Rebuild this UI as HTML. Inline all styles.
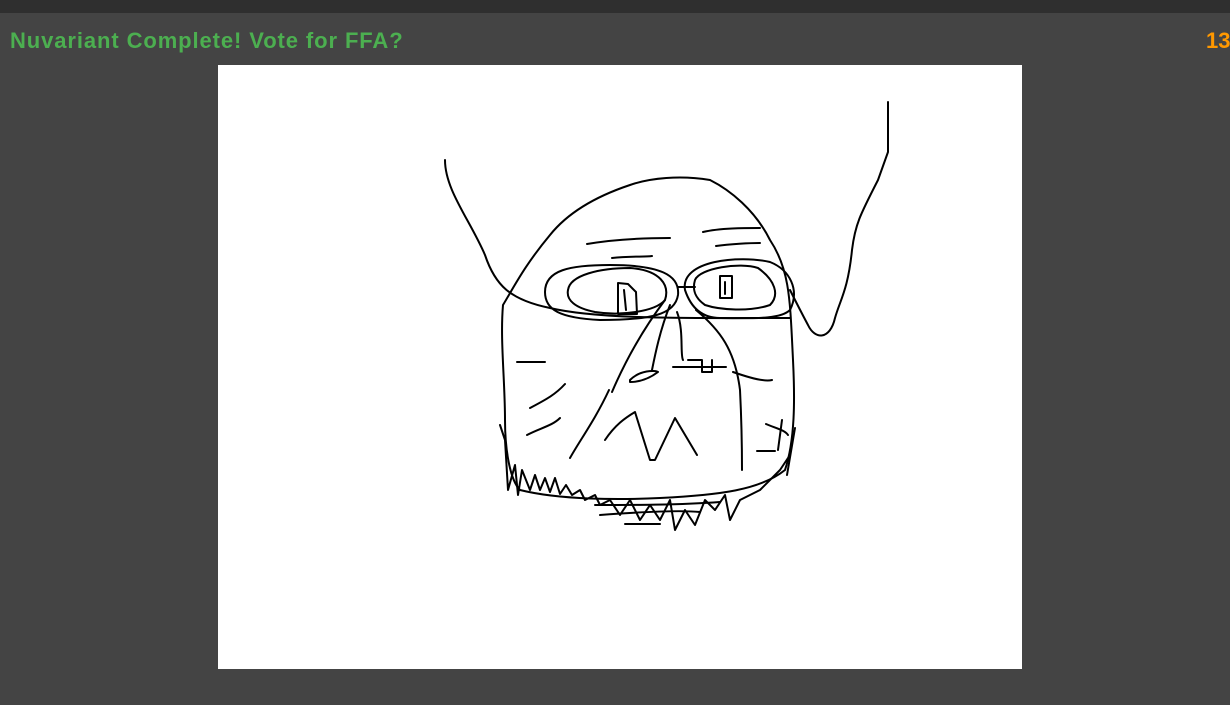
<!DOCTYPE html>
<html><head><style>
html,body{margin:0;padding:0;width:1230px;height:705px;overflow:hidden;background:#444;font-family:"Liberation Sans",sans-serif}
.top{position:absolute;left:0;top:0;width:1230px;height:13px;background:#2f2f2f}
.t{position:absolute;left:10px;top:28px;font-size:22px;font-weight:bold;color:#4caf50;letter-spacing:0.9px}
.n{position:absolute;left:1206px;top:28px;font-size:22px;font-weight:bold;color:#ff9800}
.c{position:absolute;left:218px;top:65px;width:804px;height:604px;background:#fff}
svg{position:absolute;left:0;top:0}
</style></head><body>
<div class="top"></div>
<div class="t">Nuvariant Complete! Vote for FFA?</div>
<div class="n">13</div>
<div class="c"></div>
<svg width="1230" height="705" fill="none" stroke="#000" stroke-width="2" stroke-linejoin="round" stroke-linecap="round">
<path d="M445 160 C445 190 470 220 485 255 C495 285 510 300 550 308 C600 320 700 318 790 318"/>
<path d="M888 102 V152 L878 180 C860 215 855 225 852 250 C848 290 840 300 835 318 C830 340 815 340 808 325 C800 310 795 300 790 290"/>
<path d="M503 305 C500 340 505 380 505 420 C505 450 510 480 520 490 C560 500 620 500 660 498 C720 495 760 490 785 470 C795 440 795 400 793 360 C790 300 790 270 770 240 C755 210 730 190 710 180 C680 175 650 178 630 185 C600 195 570 210 550 235 C525 265 515 285 503 305"/>
<path d="M545 292 C545 270 570 265 610 265 C660 265 680 275 678 295 C675 315 650 320 600 320 C560 318 545 310 545 292 Z"/>
<path d="M568 290 C570 275 600 268 630 268 C660 270 670 285 665 300 C655 312 620 316 595 312 C575 308 566 300 568 290 Z"/>
<path d="M618 283 V314 H637 L636 292 L628 284 Z M624 290 L626 310"/>
<path d="M678 287 H695"/>
<path d="M685 290 C680 260 740 255 770 262 C790 270 800 290 790 310 C780 320 750 318 720 318 C700 318 690 305 685 290 Z"/>
<path d="M695 280 C700 268 740 262 758 268 C775 280 780 295 770 305 C750 312 720 310 705 305 C695 298 692 290 695 280 Z"/>
<rect x="720" y="276" width="12" height="22"/>
<path d="M725 282 V294"/>
<path d="M587 244 C610 240 640 238 670 238 M612 258 C630 256 645 257 652 256 M703 232 C720 228 745 228 760 228 M716 246 C730 244 750 243 760 243"/>
<path d="M665 300 C650 320 630 350 612 392 M670 305 C660 330 655 355 652 370 M677 312 C684 330 680 355 683 360 M696 310 C720 330 735 350 740 390 C742 430 742 455 742 470"/>
<path d="M630 380 C640 370 655 370 658 372 C650 378 640 382 630 382 Z"/>
<path d="M673 367 H726 M688 360 H702 V372 H712 V360"/>
<path d="M609 390 C595 420 580 440 570 458 M517 362 H545 M530 408 C545 400 555 395 565 384 M527 435 C540 428 552 426 560 418 M605 440 C615 425 625 418 635 412 L650 460 L655 460 L675 418 L697 455"/>
<path d="M733 372 C750 378 765 382 772 380 M766 424 C775 428 785 430 788 435 M757 451 H775 M782 420 L778 450 M795 428 L787 475"/>
<path d="M500 425 L505 440 L508 490 L515 465 L518 495 L522 470 L530 490 L535 475 L540 490 L545 478 L550 492 L555 478 L560 494 L566 485 L572 495 L580 490 L585 500 L595 495 L600 505 L610 500 L620 515 L630 500 L640 520 L650 505 L660 520 L670 500 L675 530 L685 510 L695 525 L705 500 L715 510 L725 495 L730 520 L740 500 L760 490 L780 470 L790 455"/>
<path d="M595 505 C630 505 680 505 720 502 M600 515 C640 512 680 510 700 512 M625 524 H660"/>
</svg>
</body></html>
